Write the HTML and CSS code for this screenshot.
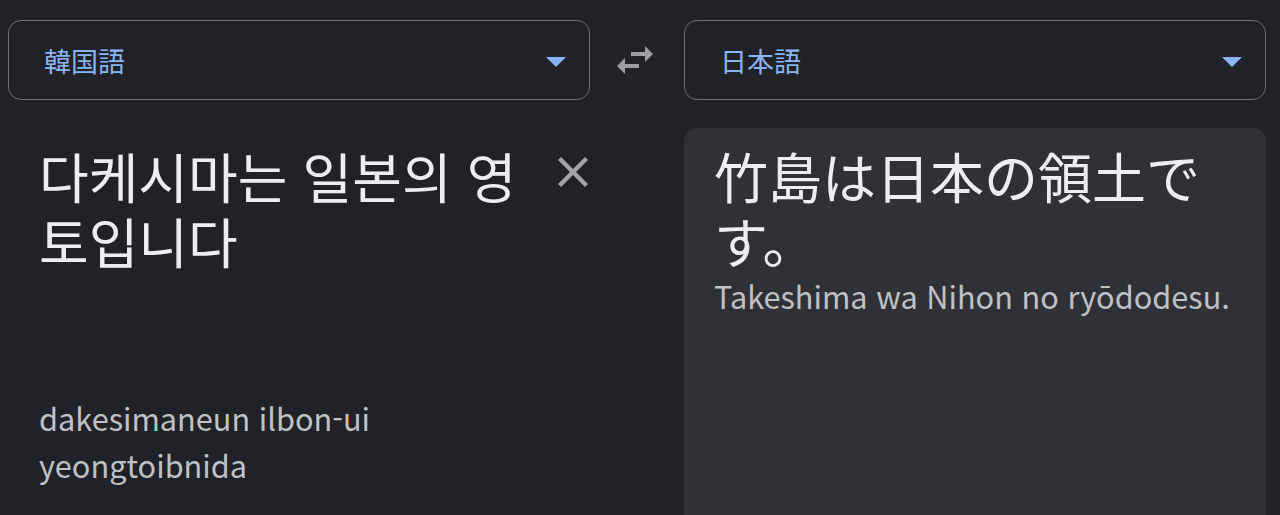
FILE: index.html
```html
<!DOCTYPE html>
<html lang="ko">
<head>
<meta charset="utf-8">
<title>翻訳</title>
<link rel="stylesheet" href="styles.css">
</head>
<body>
<main class="translator">
  <div class="lang-bar">
    <button class="lang-select">
      <span class="lang-name" lang="ja">韓国語</span>
      <svg class="drop-arrow" viewBox="7 10 10 5" width="20" height="10"><path d="M7 10l5 5 5-5z"/></svg>
    </button>
    <button class="swap">
      <svg viewBox="0 0 24 24" width="48" height="48"><path d="M6.99 11L3 15l3.99 4v-3H14v-2H6.99v-3zM21 9l-3.99-4v3H10v2h7.01v3L21 9z"/></svg>
    </button>
    <button class="lang-select">
      <span class="lang-name" lang="ja">日本語</span>
      <svg class="drop-arrow" viewBox="7 10 10 5" width="20" height="10"><path d="M7 10l5 5 5-5z"/></svg>
    </button>
  </div>

  <div class="panels">
    <section class="source">
      <div class="source-row">
        <p class="main-text ko" lang="ko">다케시마는 일본의 영토입니다</p>
        <svg class="clear" viewBox="5 5 14 14" width="30" height="30"><path d="M19 6.41L17.59 5 12 10.59 6.41 5 5 6.41 10.59 12 5 17.59 6.41 19 12 13.41 17.59 19 19 17.59 13.41 12z"/></svg>
      </div>
      <p class="romaji">dakesimaneun ilbon-ui yeongtoibnida</p>
    </section>
    <div class="spacer"></div>
    <section class="target">
      <p class="main-text ja" lang="ja">竹島は日本の領土です。</p>
      <p class="romaji">Takeshima wa Nihon no ryōdodesu.</p>
    </section>
  </div>
</main>
</body>
</html>
```

FILE: styles.css
```css
html, body {
  margin: 0;
  padding: 0;
  height: 100%;
  overflow: hidden;
  background: #212227;
}

body {
  font-family: "Noto Sans CJK JP", "Noto Sans CJK KR", "Noto Sans", sans-serif;
  color: #e8eaed;
}

p {
  margin: 0;
}

.translator {
  padding: 20px 14px 0 8px;
}

.lang-bar {
  display: grid;
  grid-template-columns: 1fr 94px 1fr;
  height: 80px;
}

.lang-select {
  display: flex;
  align-items: center;
  justify-content: space-between;
  padding: 0 23px 0 35px;
  border: 1.5px solid #6e7074;
  border-radius: 13px;
  background: transparent;
  font: inherit;
  cursor: pointer;
}

.lang-name {
  font-family: "Noto Sans CJK JP", sans-serif;
  font-size: 27px;
  color: #8ab4f8;
}

.drop-arrow {
  margin-top: 3px;
  fill: #8ab4f8;
}

.swap {
  display: flex;
  align-items: center;
  justify-content: center;
  padding: 0 4px 0 0;
  border: 0;
  background: transparent;
}

.swap svg {
  fill: #9c9ea2;
}

.panels {
  display: grid;
  grid-template-columns: 1fr 94px 1fr;
  margin-top: 28px;
}

.source {
  padding: 15px 0 0 31px;
}

.source-row {
  display: flex;
  align-items: flex-start;
  min-height: 251px;
}

.main-text {
  flex: 1;
  font-size: 54px;
  line-height: 65px;
  color: #eceef1;
}

.main-text.ko {
  font-family: "Noto Sans CJK KR", sans-serif;
}

.main-text.ja {
  font-family: "Noto Sans CJK JP", sans-serif;
}

.clear {
  flex: none;
  margin: 14px 2px 0 0;
  fill: #a3a5a9;
}

.romaji {
  font-family: "Noto Sans CJK JP", sans-serif;
  font-size: 30.7px;
  line-height: 47px;
  color: #bfc1c5;
}

.source .romaji {
  width: 360px;
}

.target {
  height: 420px;
  padding: 15px 32px 0 30px;
  border-radius: 13px;
  background: #303136;
}

.target .romaji {
  margin-top: 6px;
  line-height: 34px;
}
```
